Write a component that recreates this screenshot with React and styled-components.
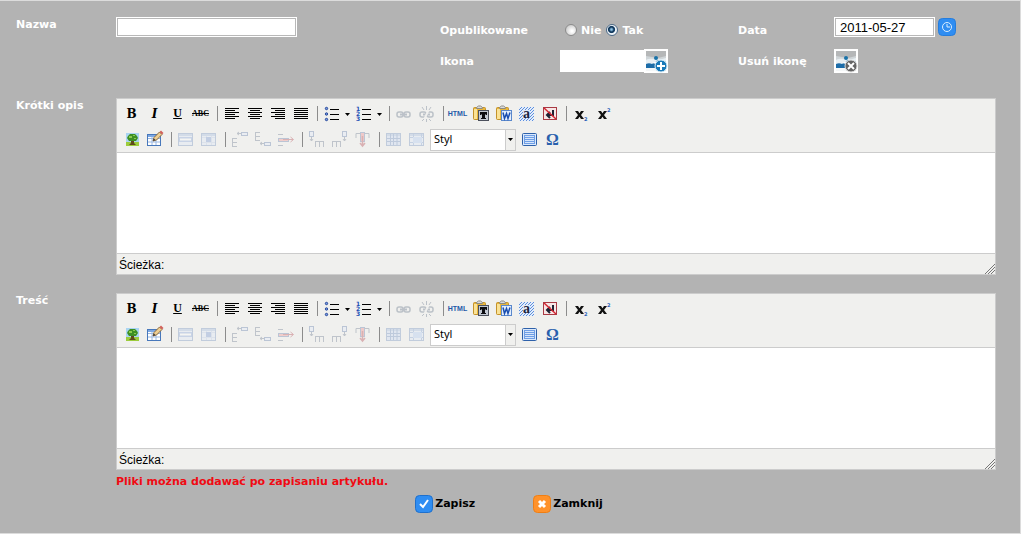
import React, { useState } from "react";
import styled, { createGlobalStyle } from "styled-components";

const GlobalStyle = createGlobalStyle`
  * { box-sizing: border-box; }
  body { margin: 0; background: #b3b3b3; }
  button, input, select, textarea { font: inherit; }
`;

const Page = styled.form`
  min-height: 100vh;
  padding: 15px 24px 20px 16px;
  border: 1px solid #dcdcdc;
  border-left: 0;
  background: #b3b3b3;
  color: #fff;
  font: bold 11px/16px "DejaVu Sans", Verdana, sans-serif;
`;

const Fields = styled.div`
  display: grid;
  grid-template-columns: 100px minmax(0, 324fr) 120px minmax(0, 178fr) 96px minmax(0, 162fr);
  grid-template-rows: 28px 36px;
  align-items: start;
`;

const Label = styled.label`
  grid-column: ${(p) => p.$column || "auto"};
  padding-top: ${(p) => p.$top || 0}px;
`;

const Legend = styled.span`
  padding-top: ${(p) => p.$top || 0}px;
`;

const Group = styled.div`
  display: flex;
  align-items: center;
  gap: ${(p) => p.$gap || 0}px;
  padding-top: ${(p) => p.$top || 0}px;
`;

const RadioGroup = styled(Group)`
  padding-left: 5px;
`;

const TextInput = styled.input`
  width: ${(p) => p.$width}px;
  height: 20px;
  padding: 0 5px;
  border: 1px solid #fff;
  outline: 0;
  box-shadow: inset 0 0 0 1px #b8b8b8;
  background: #fff;
  color: #000;
  font: 13px "Liberation Sans", Arial, sans-serif;
`;

const IconInput = styled(TextInput)`
  height: 22px;
  box-shadow: none;
`;

const RadioLabel = styled.label`
  display: flex;
  align-items: center;
  gap: 4px;
`;

const Radio = styled.input`
  appearance: none;
  width: 12px;
  height: 12px;
  margin: 0 0 3px;
  border: 1px solid #8c8c8c;
  border-radius: 50%;
  background: radial-gradient(circle at 60% 60%, #fff 10%, #c9c9c9 80%);
  &:checked {
    border-color: #4d6b88;
    background: radial-gradient(circle at 45% 45%, #8fc5e8 0 8%, #123a5e 30% 40%, #eef3f8 52%);
  }
`;

const PlainButton = styled.button`
  display: flex;
  align-items: center;
  gap: 2px;
  padding: 0;
  border: 0;
  background: none;
  color: #000;
  cursor: pointer;
`;

const EditorRow = styled.div`
  display: grid;
  grid-template-columns: 100px minmax(0, 1fr);
  margin-top: 18px;
`;

const Editor = styled.section`
  border: 1px solid #ccc;
  background: #f0f0ee;
  color: #000;
`;

const Toolbar = styled.div`
  display: grid;
  gap: 1px;
  padding: 2px 3px 0;
  border-bottom: 1px solid #ccc;
`;

const ToolRow = styled.div`
  display: flex;
  height: 25px;
`;

const Tool = styled.button`
  display: flex;
  align-items: center;
  justify-content: center;
  width: ${(p) => (p.$narrow ? 9 : 23)}px;
  height: 25px;
  padding: 0;
  border: 0;
  background: none;
  color: #000;
  opacity: ${(p) => (p.disabled ? 0.35 : 1)};
`;

const Glyph = styled.span`
  font: ${(p) => p.$font};
  font-style: ${(p) => (p.$italic ? "italic" : "normal")};
  text-decoration: ${(p) => p.$line || "none"};
  color: ${(p) => p.$color || "#000"};
`;

const Separator = styled.span`
  width: 1px;
  height: 15px;
  margin: 5px 2px 0 5px;
  background: #8c8c8c;
`;

const StyleSelect = styled.select`
  appearance: none;
  width: 76px;
  height: 22px;
  padding: 0 3px 2px;
  border: 1px solid #ccc;
  border-radius: 0;
  background: #fff;
  color: #000;
  font: 11px "Noto Sans", Tahoma, sans-serif;
`;

const SelectBox = styled.div`
  display: flex;
  align-items: center;
  margin: 0 2px;
`;

const SelectArrow = styled.span`
  display: flex;
  align-items: center;
  justify-content: center;
  width: 10px;
  height: 22px;
  border: 1px solid #ccc;
  border-left: 0;
`;

const Content = styled.textarea`
  display: block;
  width: 100%;
  height: 100px;
  padding: 8px;
  border: 0;
  outline: 0;
  resize: none;
  background: #fff;
`;

const StatusBar = styled.div`
  display: flex;
  justify-content: space-between;
  align-items: center;
  height: 21px;
  padding: 2px 0 0 2px;
  border-top: 1px solid #ccc;
  font: 12px/16px "Liberation Sans", Arial, sans-serif;
`;

const Notice = styled.p`
  margin: 4px 0 0 100px;
  color: #f00a12;
`;

const Actions = styled.div`
  display: flex;
  justify-content: center;
  gap: 58px;
  margin-top: 5px;
  padding-left: 6px;
`;

const Icon = ({ w = 23, h = 25, children }) => (
  <svg width={w} height={h} viewBox={`0 0 ${w} ${h}`} fill="none" aria-hidden="true">
    {children}
  </svg>
);

const Lines = ({ rows }) => (
  <g stroke="#000" shapeRendering="crispEdges">
    {rows.map(([x, end], i) => (
      <path key={i} d={`M${x} ${7.5 + i * 2}H${end}`} />
    ))}
  </g>
);

const alternate = (a, b) => [a, b, a, b, a, b];

const Chevron = () => (
  <Icon w={9} h={25}>
    <path d="M2 12h5l-2.500 3z" fill="#000" />
  </Icon>
);

const ListLines = () => (
  <path d="M10 8.500h9M10 13.500h9M10 18.500h9" stroke="#000" shapeRendering="crispEdges" />
);

const Clipboard = ({ children }) => (
  <Icon>
    <rect x="4.500" y="6.500" width="12" height="12" rx="1" fill="#e9b63a" stroke="#c3922b" />
    <path d="M5 8h3v10H5z" fill="#fae296" />
    <path d="M7.500 7.500v-1l2-1.500h2l2 1.500v1z" fill="#d9dbde" stroke="#8d8a80" />
    {children}
  </Icon>
);

const LinkShape = () => (
  <g stroke="#5b6c82" strokeWidth="1.500">
    <rect x="5" y="11" width="6" height="5" rx="2" />
    <rect x="12" y="11" width="6" height="5" rx="2" />
    <path d="M8 13.500h7" strokeWidth="2" />
  </g>
);

const Cell = ({ x, y, w = 7, h = 3, fill = "#dfe9fb" }) => (
  <rect x={x + 0.5} y={y + 0.5} width={w - 1} height={h} fill={fill} stroke="#5b78a8" />
);

const TableFrame = () => (
  <>
    <rect x="4.500" y="6.500" width="14" height="12" fill="#dbe6f8" stroke="#6b8cbd" />
    <path d="M5 8h13" stroke="#9fb9df" strokeWidth="2" />
  </>
);

const SmallX = () => (
  <path d="M6 10h3l1.500 2.300L12 10h3l-3 4 3 4h-3l-1.500-2.300L9 18H6l3-4z" fill="#111" />
);

const Bracket = ({ y }) => (
  <path
    d={`M4 ${y + 0.5}h5M4 ${y + 4.5}h5M4 ${y + 8.5}h5M4.500 ${y}v9`}
    stroke="#66758c"
    shapeRendering="crispEdges"
  />
);

const Comb = ({ x }) => (
  <path
    d={`M${x + 0.5} 20v-6M${x + 4.5} 20v-6M${x + 8.5} 20v-6M${x} 14.500h9`}
    stroke="#66758c"
    shapeRendering="crispEdges"
  />
);

const draw = {
  left: <Icon><Lines rows={alternate([5, 19], [5, 15])} /></Icon>,
  center: <Icon><Lines rows={alternate([5, 19], [7, 17])} /></Icon>,
  right: <Icon><Lines rows={alternate([5, 19], [9, 19])} /></Icon>,
  full: <Icon><Lines rows={alternate([5, 19], [5, 19])} /></Icon>,
  bullets: (
    <Icon>
      <ListLines />
      {[7.5, 13, 18.5].map((y) => (
        <circle key={y} cx="6.500" cy={y} r="1.200" fill="#7a9be0" stroke="#24479b" />
      ))}
    </Icon>
  ),
  numbers: (
    <Icon>
      <ListLines />
      <g fill="#1d4fb4" fontFamily="DejaVu Sans, sans-serif" fontSize="6" fontWeight="bold">
        <text x="4" y="10">1</text>
        <text x="4" y="15">2</text>
        <text x="4" y="20">3</text>
      </g>
    </Icon>
  ),
  link: <Icon><LinkShape /></Icon>,
  unlink: (
    <Icon>
      <LinkShape />
      <path d="M14 8L9 19" stroke="#f0f0ee" strokeWidth="2" />
      <path d="M11.500 5v4M7 6l2 3M16 6l-2 3M11.500 18v3M7 20l2-2M16 20l-2-2" stroke="#5b6c82" />
    </Icon>
  ),
  pasteText: (
    <Clipboard>
      <rect x="9.500" y="9.500" width="10" height="10" fill="#c3c9d3" stroke="#4b505c" />
      <path d="M11 11h7v3h-1l-1-1v4h1v1h-5v-1h1v-4l-1 1h-1z" fill="#0c0c10" />
    </Clipboard>
  ),
  pasteWord: (
    <Clipboard>
      <rect x="9.500" y="9.500" width="10" height="10" fill="#e3eefd" stroke="#5a88cc" />
      <path d="M11 11.500l1.500 6 2-5 1.500 5 2-6" stroke="#1b4fb0" strokeWidth="1.500" />
    </Clipboard>
  ),
  selectAll: (
    <Icon>
      <rect x="4" y="6" width="15" height="14" fill="#e4edfb" />
      <path
        d="M4 9l3-3M4 12l6-6M4 15l9-9M4 18l12-12M5 20l14-14M8 20l11-11M11 20l8-8M14 20l5-5M17 20l2-2"
        stroke="#5d8fdc"
      />
      <rect x="8" y="9" width="7" height="8" fill="#dfe9f8" />
      <text x="8" y="17" fontFamily="Liberation Serif, serif" fontSize="14" fontWeight="bold" fill="#1c2740">a</text>
    </Icon>
  ),
  hidden: (
    <Icon>
      <rect x="5.500" y="6.500" width="13" height="12" fill="#f8e6e6" stroke="#a83a44" />
      <path d="M15 9v5H9.500M12 11l-3 3 3 3" stroke="#1d2233" strokeWidth="2" />
      <path d="M6 7l12 11" stroke="#d52632" strokeWidth="1.500" />
    </Icon>
  ),
  sub: (
    <Icon>
      <SmallX />
      <text x="15" y="20" fontFamily="DejaVu Sans, sans-serif" fontSize="5" fontWeight="bold" fill="#2b62b8">2</text>
    </Icon>
  ),
  sup: (
    <Icon>
      <SmallX />
      <text x="15" y="11" fontFamily="DejaVu Sans, sans-serif" fontSize="5" fontWeight="bold" fill="#2b62b8">2</text>
    </Icon>
  ),
  image: (
    <Icon>
      <rect x="6" y="6" width="13" height="13" fill="#a9d4f2" />
      <path d="M6 15h13v4H6z" fill="#9ccc3c" />
      <path d="M11 13h3v3l2 2H9l2-2z" fill="#5f4a1c" />
      <path d="M8 9l2-2h5l2 2 1 2-2 3H9l-2-3z" fill="#3d8f24" />
      <path d="M9 9h3v2H9zM13 8h2v1h-2zM14 11h2v1h-2z" fill="#8ccb4c" />
    </Icon>
  ),
  tableEdit: (
    <Icon>
      <rect x="4.500" y="7.500" width="13" height="11" fill="#fff" stroke="#4878bb" />
      <path d="M5 9h12" stroke="#7da8e3" strokeWidth="2" />
      <path d="M5 11.500h12M5 15h12M9 10v8M13 10v8" stroke="#9ab8e2" />
      <path d="M10 14l1-3.500L16.500 5l2.500 2.500-5.500 5.500z" fill="#efcf92" stroke="#8a6a3c" />
      <path d="M16.500 5L18 3.500 20.500 6 19 7.500z" fill="#d2605a" />
      <path d="M10 14l.8-2.500L12.500 13z" fill="#30323a" />
    </Icon>
  ),
  rowProps: (
    <Icon><TableFrame /><rect x="5" y="10" width="13" height="5" fill="#7f9fd8" /><path d="M6 12.500h11" stroke="#fff" strokeWidth="2" /></Icon>
  ),
  cellProps: (
    <Icon><TableFrame /><path d="M5 10.500h13M5 15.500h13M9.500 9v9M14.500 9v9" stroke="#b9c9e6" /><rect x="9" y="10" width="5" height="5" fill="#6f90cf" /></Icon>
  ),
  rowBefore: (
    <Icon><Cell x={13} y={5} w={7} /><path d="M9 6.500h4M11 5L9 6.500 11 8" stroke="#66758c" /><Bracket y={11} /></Icon>
  ),
  rowAfter: (
    <Icon><Cell x={13} y={15} w={7} /><path d="M9 16.500h4M11 15l-2 1.500 2 1.500" stroke="#66758c" /><Bracket y={5} /></Icon>
  ),
  rowDelete: (
    <Icon>
      <path d="M4 7.500h5M4 18.500h5" stroke="#66758c" />
      <Cell x={4} y={11} w={11} fill="#f08d8d" />
      <path d="M9 12.500h10M16.500 10l3 2.500-3 2.500" stroke="#b03e48" />
    </Icon>
  ),
  colBefore: (
    <Icon><Cell x={4} y={4} w={5} h={5} /><path d="M6.500 10v4M5 12l1.500 2L8 12" stroke="#66758c" /><Comb x={10} /></Icon>
  ),
  colAfter: (
    <Icon><Cell x={14} y={4} w={5} h={5} /><path d="M16.500 10v4M15 12l1.500 2 1.500-2" stroke="#66758c" /><Comb x={4} /></Icon>
  ),
  colDelete: (
    <Icon>
      <path d="M5 11V6.500h4M18 11V6.500h-4" stroke="#66758c" />
      <Cell x={9} y={5} w={5} h={9} fill="#ee8282" />
      <path d="M11.500 9v10M9 16l2.500 3 2.500-3" stroke="#b03e48" strokeWidth="1.500" />
    </Icon>
  ),
  split: (
    <Icon>
      <TableFrame />
      <rect x="5" y="9" width="13" height="9" fill="#c3d6f4" />
      <path d="M5 11.500h13M5 14.500h13M8.500 7v11M11.500 7v11M15 7v11" stroke="#6385bd" />
    </Icon>
  ),
  merge: (
    <Icon><TableFrame /><path d="M5 10.500h13M5 15.500h13M8.500 7v11M16.500 7v11" stroke="#7899cd" /><rect x="8" y="10" width="9" height="6" fill="#a9c8f2" /></Icon>
  ),
  block: (
    <Icon>
      <rect x="4.500" y="6.500" width="14" height="12" rx="1" fill="#dbe9fc" stroke="#2e61aa" />
      <rect x="6" y="8" width="11" height="9" fill="#6f9fe6" />
      <path d="M7 9.500h9M7 11.500h9M7 13.500h9M7 15.500h9" stroke="#d5e5fb" />
    </Icon>
  ),
};

const BoldGlyph = <Glyph $font='bold 12px "DejaVu Serif", serif'>B</Glyph>;
const ItalicGlyph = <Glyph $italic $font='bold 12px "DejaVu Serif", serif'>I</Glyph>;
const UnderGlyph = <Glyph $line="underline" $font='bold 12px "Liberation Serif", serif'>U</Glyph>;
const StrikeGlyph = <Glyph $line="line-through" $font='bold 8px "Liberation Serif", serif'>ABC</Glyph>;
const HtmlGlyph = <Glyph $color="#2358a8" $font='bold 7px "Liberation Sans", sans-serif'>HTML</Glyph>;
const OmegaGlyph = <Glyph $color="#2960ad" $font='bold 16px "Liberation Serif", serif'>Ω</Glyph>;

const firstRow = [
  [["Pogrubienie", BoldGlyph], ["Kursywa", ItalicGlyph], ["Podkreślenie", UnderGlyph], ["Przekreślenie", StrikeGlyph]],
  [["Do lewej", draw.left], ["Do środka", draw.center], ["Do prawej", draw.right], ["Wyjustuj", draw.full]],
  [["Lista", draw.bullets, "menu"], ["Numerowanie", draw.numbers, "menu"]],
  [["Wstaw łącze", draw.link, "off"], ["Usuń łącze", draw.unlink, "off"]],
  [
    ["Edytuj HTML", HtmlGlyph],
    ["Wklej tekst", draw.pasteText],
    ["Wklej z Worda", draw.pasteWord],
    ["Zaznacz wszystko", draw.selectAll],
    ["Znaki ukryte", draw.hidden],
  ],
  [["Indeks dolny", draw.sub], ["Indeks górny", draw.sup]],
];

const secondRow = [
  [["Obraz", draw.image], ["Tabela", draw.tableEdit]],
  [["Wiersz", draw.rowProps, "off"], ["Komórka", draw.cellProps, "off"]],
  [["Wiersz przed", draw.rowBefore, "off"], ["Wiersz po", draw.rowAfter, "off"], ["Usuń wiersz", draw.rowDelete, "off"]],
  [["Kolumna przed", draw.colBefore, "off"], ["Kolumna po", draw.colAfter, "off"], ["Usuń kolumnę", draw.colDelete, "off"]],
  [["Podziel komórki", draw.split, "off"], ["Połącz komórki", draw.merge, "off"]],
];

function ToolGroups({ groups }) {
  return groups.map((group, i) => (
    <React.Fragment key={i}>
      {i > 0 && <Separator />}
      {group.map(([name, picture, kind]) => (
        <React.Fragment key={name}>
          <Tool type="button" aria-label={name} disabled={kind === "off"}>{picture}</Tool>
          {kind === "menu" && (
            <Tool type="button" $narrow aria-label={`${name}: opcje`}><Chevron /></Tool>
          )}
        </React.Fragment>
      ))}
    </React.Fragment>
  ));
}

function RichEditor({ id, label }) {
  return (
    <EditorRow>
      <Label htmlFor={id}>{label}</Label>
      <Editor>
        <Toolbar role="toolbar" aria-label={label}>
          <ToolRow><ToolGroups groups={firstRow} /></ToolRow>
          <ToolRow>
            <ToolGroups groups={secondRow} />
            <SelectBox>
              <StyleSelect aria-label="Styl"><option>Styl</option></StyleSelect>
              <SelectArrow>
                <Icon w={7} h={5}><path d="M1 1h5l-2.500 3z" fill="#000" /></Icon>
              </SelectArrow>
            </SelectBox>
            <Tool type="button" aria-label="Blok">{draw.block}</Tool>
            <Tool type="button" aria-label="Znak specjalny">{OmegaGlyph}</Tool>
          </ToolRow>
        </Toolbar>
        <Content id={id} />
        <StatusBar>
          <span>Ścieżka:</span>
          <Icon w={12} h={18}>
            <path d="M2 18L12 8M5 18l7-7M8 18l4-4" stroke="#777" />
          </Icon>
        </StatusBar>
      </Editor>
    </EditorRow>
  );
}

const Photo = ({ children }) => (
  <Icon w={24} h={24}>
    <rect x="1" y="1" width="22" height="22" fill="#cfd5d8" stroke="#fff" strokeWidth="2" />
    <path d="M2 2h20v5l-8 2-12-2z" fill="#b5b7b8" />
    <path d="M2 11c6-3 12 1 20-2v7H2z" fill="#e8eff3" />
    <path d="M2 15c2-1 4-1 6 0l4-3 3-1 7 2v6H2z" fill="#1c6ca8" />
    <path d="M8 14l4-2 3 2-3 1z" fill="#fff" />
    <circle cx="12" cy="9" r="2" fill="#1872a8" />
    <path d="M2 19h20v3H2z" fill="#f4f7f8" />
    {children}
  </Icon>
);

const Badge = ({ color, edge, children }) => (
  <Icon w={18} h={18}>
    <rect x=".5" y=".5" width="17" height="17" rx="4" fill={color} stroke={edge} />
    {children}
  </Icon>
);

export default function App() {
  const [published, setPublished] = useState("tak");
  return (
    <>
      <GlobalStyle />
      <Page onSubmit={(e) => e.preventDefault()}>
        <Fields>
          <Label htmlFor="name" $top={1}>Nazwa</Label>
          <Group $top={1}><TextInput id="name" $width={181} /></Group>
          <Legend $top={7}>Opublikowane</Legend>
          <RadioGroup $gap={5} $top={7} role="radiogroup" aria-label="Opublikowane">
            <RadioLabel>
              <Radio type="radio" name="published" checked={published === "nie"} onChange={() => setPublished("nie")} />
              Nie
            </RadioLabel>
            <RadioLabel>
              <Radio type="radio" name="published" checked={published === "tak"} onChange={() => setPublished("tak")} />
              Tak
            </RadioLabel>
          </RadioGroup>
          <Label htmlFor="date" $top={7}>Data</Label>
          <Group $gap={3} $top={1}>
            <TextInput id="date" defaultValue="2011-05-27" $width={101} />
            <PlainButton type="button" aria-label="Wybierz datę">
              <Badge color="#2f8df2" edge="#257ddd">
                <circle cx="9" cy="9" r="4.500" stroke="#d9edff" />
                <path d="M9 6v3h3" stroke="#d9edff" />
              </Badge>
            </PlainButton>
          </Group>
          <Label htmlFor="icon" $column="3" $top={10}>Ikona</Label>
          <Group $top={5}>
            <IconInput id="icon" $width={84} />
            <PlainButton type="button" aria-label="Dodaj ikonę">
              <Photo>
                <circle cx="17" cy="17" r="6" fill="#1979b8" stroke="#d9edf7" />
                <path d="M17 13v8M13 17h8" stroke="#fff" strokeWidth="2" />
              </Photo>
            </PlainButton>
          </Group>
          <Label htmlFor="remove" $top={10}>Usuń ikonę</Label>
          <Group $top={5}>
            <PlainButton id="remove" type="button">
              <Photo>
                <circle cx="17" cy="17" r="6" fill="#656565" stroke="#ddd" />
                <path d="M14 14l6 6M20 14l-6 6" stroke="#fff" strokeWidth="2" />
              </Photo>
            </PlainButton>
          </Group>
        </Fields>
        <RichEditor id="summary" label="Krótki opis" />
        <RichEditor id="body" label="Treść" />
        <Notice>Pliki można dodawać po zapisaniu artykułu.</Notice>
        <Actions>
          <PlainButton type="submit">
            <Badge color="#2f8df2" edge="#1f70cc">
              <path d="M5 9l3 3 5-7" stroke="#fff" strokeWidth="2" />
            </Badge>
            Zapisz
          </PlainButton>
          <PlainButton type="button">
            <Badge color="#ff922b" edge="#ef7e14">
              <path d="M6 6l6 6M12 6l-6 6" stroke="#fff" strokeWidth="3" />
            </Badge>
            Zamknij
          </PlainButton>
        </Actions>
      </Page>
    </>
  );
}
